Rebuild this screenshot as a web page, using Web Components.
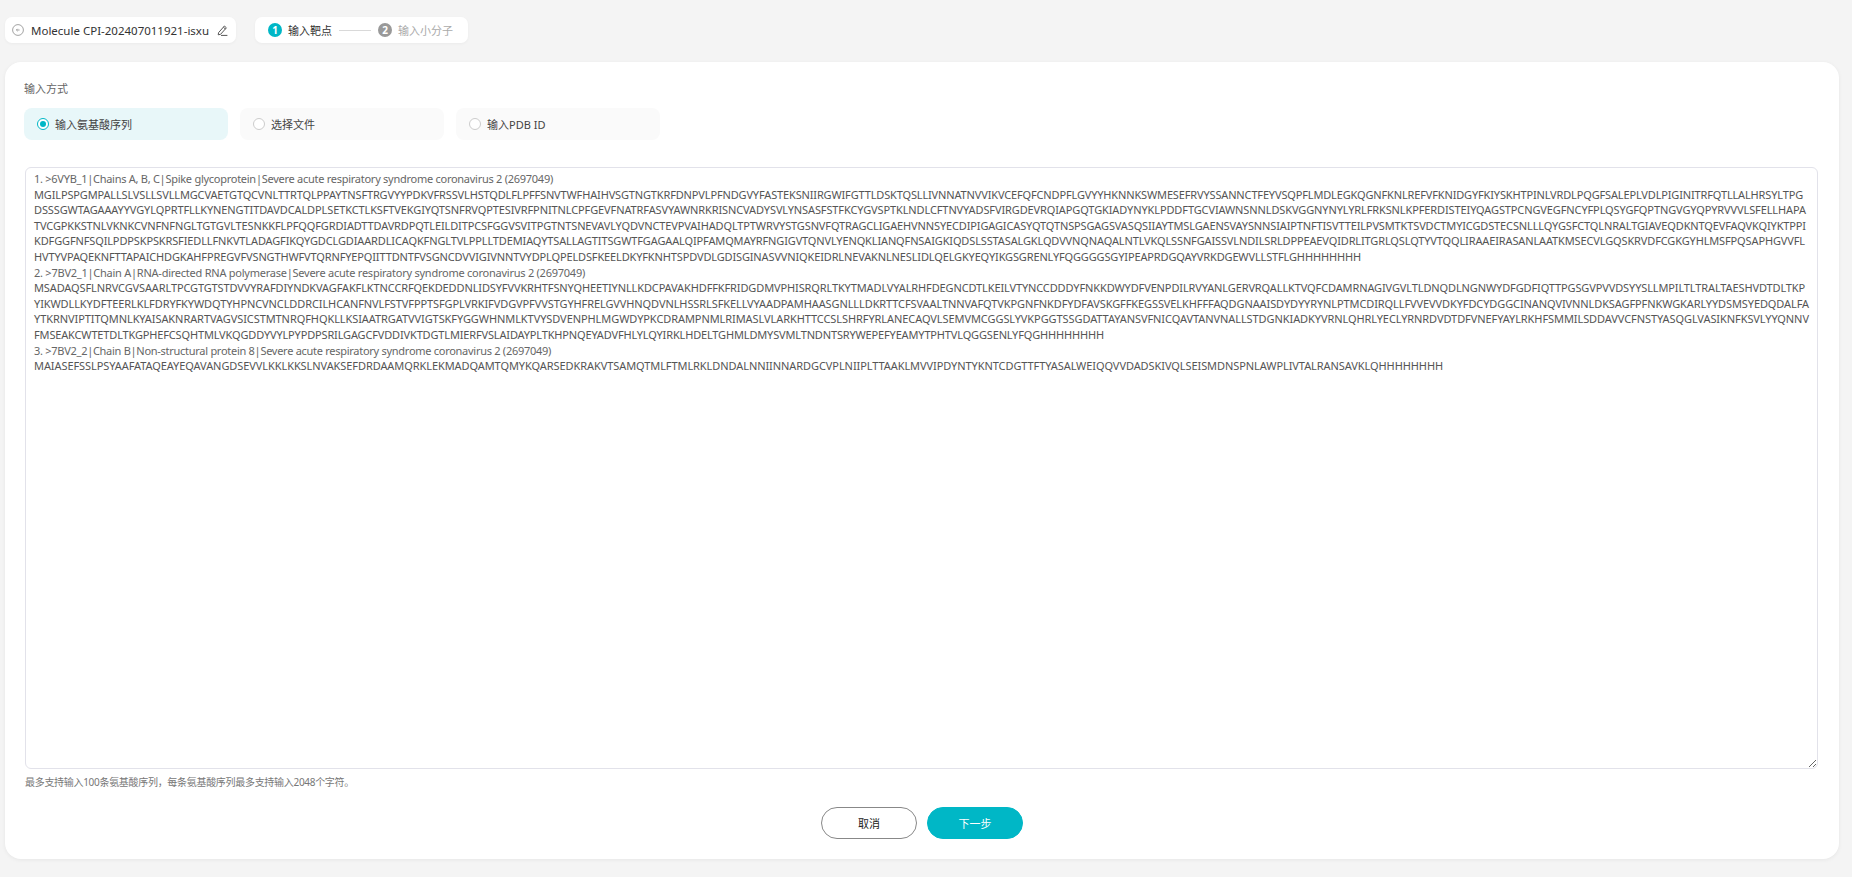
<!DOCTYPE html>
<html lang="zh">
<head>
<meta charset="utf-8">
<title>Molecule CPI</title>
<style>
  html, body { margin: 0; height: 100%; }
  body {
    background: #f4f4f4;
    font-family: "Noto Sans", "Noto Sans CJK SC", sans-serif;
    font-size: 11px;
    color: #555;
  }
  .page { display: flex; flex-direction: column; padding: 17px 13px 0 5px; gap: 19px; }
  .top { display: flex; gap: 19px; }
</style>
</head>
<body>
<div class="page">
  <div class="top">
    <molecule-title>Molecule CPI-202407011921-isxu</molecule-title>
    <step-bar></step-bar>
  </div>
  <input-panel></input-panel>
</div>

<template id="seq-text">1. &gt;6VYB_1|Chains A, B, C|Spike glycoprotein|Severe acute respiratory syndrome coronavirus 2 (2697049)
MGILPSPGMPALLSLVSLLSVLLMGCVAETGTQCVNLTTRTQLPPAYTNSFTRGVYYPDKVFRSSVLHSTQDLFLPFFSNVTWFHAIHVSGTNGTKRFDNPVLPFNDGVYFASTEKSNIIRGWIFGTTLDSKTQSLLIVNNATNVVIKVCEFQFCNDPFLGVYYHKNNKSWMESEFRVYSSANNCTFEYVSQPFLMDLEGKQGNFKNLREFVFKNIDGYFKIYSKHTPINLVRDLPQGFSALEPLVDLPIGINITRFQTLLALHRSYLTPG
DSSSGWTAGAAAYYVGYLQPRTFLLKYNENGTITDAVDCALDPLSETKCTLKSFTVEKGIYQTSNFRVQPTESIVRFPNITNLCPFGEVFNATRFASVYAWNRKRISNCVADYSVLYNSASFSTFKCYGVSPTKLNDLCFTNVYADSFVIRGDEVRQIAPGQTGKIADYNYKLPDDFTGCVIAWNSNNLDSKVGGNYNYLYRLFRKSNLKPFERDISTEIYQAGSTPCNGVEGFNCYFPLQSYGFQPTNGVGYQPYRVVVLSFELLHAPA
TVCGPKKSTNLVKNKCVNFNFNGLTGTGVLTESNKKFLPFQQFGRDIADTTDAVRDPQTLEILDITPCSFGGVSVITPGTNTSNEVAVLYQDVNCTEVPVAIHADQLTPTWRVYSTGSNVFQTRAGCLIGAEHVNNSYECDIPIGAGICASYQTQTNSPSGAGSVASQSIIAYTMSLGAENSVAYSNNSIAIPTNFTISVTTEILPVSMTKTSVDCTMYICGDSTECSNLLLQYGSFCTQLNRALTGIAVEQDKNTQEVFAQVKQIYKTPPI
KDFGGFNFSQILPDPSKPSKRSFIEDLLFNKVTLADAGFIKQYGDCLGDIAARDLICAQKFNGLTVLPPLLTDEMIAQYTSALLAGTITSGWTFGAGAALQIPFAMQMAYRFNGIGVTQNVLYENQKLIANQFNSAIGKIQDSLSSTASALGKLQDVVNQNAQALNTLVKQLSSNFGAISSVLNDILSRLDPPEAEVQIDRLITGRLQSLQTYVTQQLIRAAEIRASANLAATKMSECVLGQSKRVDFCGKGYHLMSFPQSAPHGVVFL
HVTYVPAQEKNFTTAPAICHDGKAHFPREGVFVSNGTHWFVTQRNFYEPQIITTDNTFVSGNCDVVIGIVNNTVYDPLQPELDSFKEELDKYFKNHTSPDVDLGDISGINASVVNIQKEIDRLNEVAKNLNESLIDLQELGKYEQYIKGSGRENLYFQGGGGSGYIPEAPRDGQAYVRKDGEWVLLSTFLGHHHHHHHH
2. &gt;7BV2_1|Chain A|RNA-directed RNA polymerase|Severe acute respiratory syndrome coronavirus 2 (2697049)
MSADAQSFLNRVCGVSAARLTPCGTGTSTDVVYRAFDIYNDKVAGFAKFLKTNCCRFQEKDEDDNLIDSYFVVKRHTFSNYQHEETIYNLLKDCPAVAKHDFFKFRIDGDMVPHISRQRLTKYTMADLVYALRHFDEGNCDTLKEILVTYNCCDDDYFNKKDWYDFVENPDILRVYANLGERVRQALLKTVQFCDAMRNAGIVGVLTLDNQDLNGNWYDFGDFIQTTPGSGVPVVDSYYSLLMPILTLTRALTAESHVDTDLTKP
YIKWDLLKYDFTEERLKLFDRYFKYWDQTYHPNCVNCLDDRCILHCANFNVLFSTVFPPTSFGPLVRKIFVDGVPFVVSTGYHFRELGVVHNQDVNLHSSRLSFKELLVYAADPAMHAASGNLLLDKRTTCFSVAALTNNVAFQTVKPGNFNKDFYDFAVSKGFFKEGSSVELKHFFFAQDGNAAISDYDYYRYNLPTMCDIRQLLFVVEVVDKYFDCYDGGCINANQVIVNNLDKSAGFPFNKWGKARLYYDSMSYEDQDALFA
YTKRNVIPTITQMNLKYAISAKNRARTVAGVSICSTMTNRQFHQKLLKSIAATRGATVVIGTSKFYGGWHNMLKTVYSDVENPHLMGWDYPKCDRAMPNMLRIMASLVLARKHTTCCSLSHRFYRLANECAQVLSEMVMCGGSLYVKPGGTSSGDATTAYANSVFNICQAVTANVNALLSTDGNKIADKYVRNLQHRLYECLYRNRDVDTDFVNEFYAYLRKHFSMMILSDDAVVCFNSTYASQGLVASIKNFKSVLYYQNNV
FMSEAKCWTETDLTKGPHEFCSQHTMLVKQGDDYVYLPYPDPSRILGAGCFVDDIVKTDGTLMIERFVSLAIDAYPLTKHPNQEYADVFHLYLQYIRKLHDELTGHMLDMYSVMLTNDNTSRYWEPEFYEAMYTPHTVLQGGSENLYFQGHHHHHHHH
3. &gt;7BV2_2|Chain B|Non-structural protein 8|Severe acute respiratory syndrome coronavirus 2 (2697049)
MAIASEFSSLPSYAAFATAQEAYEQAVANGDSEVVLKKLKKSLNVAKSEFDRDAAMQRKLEKMADQAMTQMYKQARSEDKRAKVTSAMQTMLFTMLRKLDNDALNNIINNARDGCVPLNIIPLTTAAKLMVVIPDYNTYKNTCDGTTFTYASALWEIQQVVDADSKIVQLSEISMDNSPNLAWPLIVTALRANSAVKLQHHHHHHHH</template>

<script>
const ROW_WIDTHS = [519, 1769, 1772, 1772, 1771, 1327, 551, 1771, 1775, 1775, 1070, 517, 1409];

class MoleculeTitle extends HTMLElement {
  constructor() {
    super();
    this.attachShadow({ mode: "open" }).innerHTML = `
      <style>
        :host {
          display: flex; align-items: center; box-sizing: border-box;
          width: 231px; height: 26px; padding: 0 8px 0 7px;
          background: #fff; border-radius: 7px; color: #333;
          box-shadow: 0 1px 3px rgba(0,0,0,.04);
        }
        .name { flex: 1; margin-left: 7px; white-space: nowrap; font-size: 11.5px; }
        svg { display: block; flex: none; }
      </style>
      <svg width="12" height="12" viewBox="0 0 12 12" fill="none" stroke="#999" stroke-width=".9">
        <circle cx="6" cy="6" r="5.4"/><path d="M7.6 6H4.4M5.6 4.8 4.4 6l1.2 1.2"/>
      </svg>
      <span class="name"><slot></slot></span>
      <svg width="11" height="11" viewBox="0 0 11 11" fill="none" stroke="#555" stroke-width="1">
        <path d="M1.6 7.6 7.4 1l2 1.8L3.6 9.3l-2.4.5zM6.4 2.2l2 1.8M4 10.4h6.4"/>
      </svg>`;
  }
}

class StepBar extends HTMLElement {
  constructor() {
    super();
    this.attachShadow({ mode: "open" }).innerHTML = `
      <style>
        :host {
          display: flex; align-items: center; box-sizing: border-box;
          width: 213px; height: 26px; padding: 0 13px;
          background: #fff; border-radius: 7px; color: #333;
          box-shadow: 0 1px 3px rgba(0,0,0,.04);
        }
        .dot {
          width: 14px; height: 14px; border-radius: 50%; background: #00b7c6; color: #fff;
          font: 700 10px/14px "Noto Sans", sans-serif; text-align: center; margin-right: 6px;
        }
        .line { width: 32px; height: 1px; background: #d9d9d9; margin: 0 7px; }
        .off { color: #aaa; }
        .off .dot { background: #999; }
        .step { display: flex; align-items: center; white-space: nowrap; }
      </style>
      <span class="step"><span class="dot">1</span>输入靶点</span>
      <span class="line"></span>
      <span class="step off"><span class="dot">2</span>输入小分子</span>`;
  }
}

class WayOption extends HTMLElement {
  constructor() {
    super();
    this.attachShadow({ mode: "open" }).innerHTML = `
      <style>
        :host {
          display: flex; align-items: center; box-sizing: border-box;
          width: 204px; height: 32px; padding: 0 13px; gap: 6px;
          background: #fafafa; border-radius: 8px; color: #444;
        }
        :host([checked]) { background: #e8f7f9; }
        .radio {
          width: 10px; height: 10px; border-radius: 50%; border: 1px solid #ccc;
          position: relative; flex: none; background: #fff;
        }
        :host([checked]) .radio { border-color: #00b7c6; }
        :host([checked]) .radio::after {
          content: ""; position: absolute; inset: 2px; border-radius: 50%; background: #00b7c6;
        }
      </style>
      <span class="radio"></span><slot></slot>`;
  }
}

class SeqInput extends HTMLElement {
  constructor() {
    super();
    this.attachShadow({ mode: "open" }).innerHTML = `
      <style>
        :host { display: block; }
        .box {
          box-sizing: border-box; width: 1793px; height: 602px;
          padding: 3px 8px; border: 1px solid #e2e2ea; border-radius: 6px;
          font: 11px/15.6px "Noto Sans", "Noto Sans CJK SC", sans-serif; color: #555;
          overflow: hidden; resize: both; background: #fff; outline: none;
        }
        .row { white-space: pre; }
        .head { color: #666; }
      </style>
      <div class="box" role="textbox" contenteditable="true" spellcheck="false"></div>`;
    const box = this.shadowRoot.querySelector(".box");
    const lines = document.getElementById("seq-text").content.textContent.split("\n");
    lines.forEach((line) => {
      const row = document.createElement("div");
      row.className = /^\d\. >/.test(line) ? "row head" : "row";
      const text = document.createElement("span");
      text.textContent = line;
      row.appendChild(text);
      box.appendChild(row);
    });
  }

  connectedCallback() {
    this.shadowRoot.querySelectorAll(".row span").forEach((text, i) => {
      const diff = ROW_WIDTHS[i] - text.getBoundingClientRect().width;
      text.style.letterSpacing = (diff / text.textContent.length).toFixed(3) + "px";
    });
  }
}

class ActionBtn extends HTMLElement {
  constructor() {
    super();
    this.attachShadow({ mode: "open" }).innerHTML = `
      <style>
        :host {
          display: flex; align-items: center; justify-content: center; box-sizing: border-box;
          width: 96px; height: 32px; border-radius: 16px; border: 1px solid #888;
          background: #fff; color: #222; cursor: pointer;
        }
        :host([primary]) { background: #00b7c6; border-color: #00b7c6; color: #fff; }
      </style>
      <slot></slot>`;
  }
}

class InputPanel extends HTMLElement {
  constructor() {
    super();
    this.attachShadow({ mode: "open" }).innerHTML = `
      <style>
        :host {
          display: block; box-sizing: border-box; height: 797px; padding: 19px 19px 0 19px;
          background: #fff; border-radius: 16px; box-shadow: 0 1px 4px rgba(0,0,0,.06);
        }
        .label { line-height: 15px; color: #666; }
        .ways { display: flex; gap: 12px; margin: 12px 0 27px; }
        .hint { font-size: 10px; line-height: 14px; color: #777; margin-top: 6px; margin-left: 1px; letter-spacing: -.3px; }
        seq-input { margin-left: 1px; }
        .actions { display: flex; justify-content: center; gap: 10px; margin-top: 18px; }
      </style>
      <div class="label">输入方式</div>
      <div class="ways">
        <way-option checked>输入氨基酸序列</way-option>
        <way-option>选择文件</way-option>
        <way-option>输入PDB ID</way-option>
      </div>
      <seq-input></seq-input>
      <div class="hint">最多支持输入100条氨基酸序列&#xFF0C;每条氨基酸序列最多支持输入2048个字符。</div>
      <div class="actions">
        <action-btn>取消</action-btn>
        <action-btn primary>下一步</action-btn>
      </div>`;
  }
}

customElements.define("molecule-title", MoleculeTitle);
customElements.define("step-bar", StepBar);
customElements.define("way-option", WayOption);
customElements.define("seq-input", SeqInput);
customElements.define("action-btn", ActionBtn);
customElements.define("input-panel", InputPanel);
</script>
</body>
</html>
